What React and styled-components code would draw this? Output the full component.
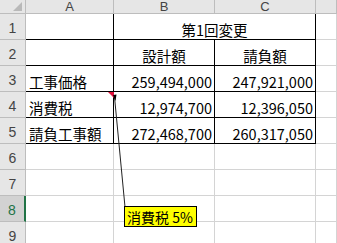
import React from 'react';
import styled, { createGlobalStyle, css } from 'styled-components';

const GlobalStyle = createGlobalStyle`
  html, body {
    margin: 0;
    padding: 0;
    background: #ffffff;
    overflow: hidden;
  }
  body {
    font-family: "Noto Sans CJK JP", "Noto Sans", sans-serif;
  }
`;

const GRID = '#d4d4d4';
const INK = '#000000';

const Sheet = styled.div`
  position: relative;
  width: 337px;
  height: 243px;
  overflow: hidden;
  display: grid;
  grid-template-columns: 26px 88px 101px 101px 1fr;
  grid-template-rows: 14px repeat(9, 26px);
`;

const Corner = styled.div`
  position: relative;
  box-sizing: border-box;
  background: #e6e6e6;
  border-right: 1px solid #bdbdbd;
  border-bottom: 1px solid #bdbdbd;

  &::after {
    content: '';
    position: absolute;
    right: 3px;
    bottom: 2px;
    width: 0;
    height: 0;
    border-left: 9px solid transparent;
    border-bottom: 9px solid #b9b9b9;
  }
`;

const ColHeader = styled.div`
  box-sizing: border-box;
  background: #e6e6e6;
  border-right: 1px solid #bdbdbd;
  border-bottom: 1px solid #bdbdbd;
  display: flex;
  align-items: center;
  justify-content: center;
  font-family: "Liberation Sans", "Noto Sans", sans-serif;
  font-size: 13px;
  line-height: 14px;
  color: #444444;
`;

const RowHeader = styled.div`
  box-sizing: border-box;
  background: ${({ active }) => (active ? '#d2d2d2' : '#e6e6e6')};
  border-bottom: 1px solid #bdbdbd;
  border-right: ${({ active }) => (active ? '2px solid #217346' : '1px solid #bdbdbd')};
  display: flex;
  align-items: center;
  justify-content: center;
  padding-top: 3px;
  font-family: "Liberation Sans", "Noto Sans", sans-serif;
  font-size: 14px;
  color: ${({ active }) => (active ? '#217346' : '#444444')};
`;

const Cell = styled.div`
  box-sizing: border-box;
  display: flex;
  align-items: flex-end;
  padding: 0 3px 2px 3px;
  border-right: 1px solid ${({ right }) => (right ? INK : GRID)};
  border-bottom: 1px solid ${({ bottom }) => (bottom ? INK : GRID)};
  font-family: "Noto Sans CJK JP", "Noto Sans", sans-serif;
  font-size: 14.5px;
  line-height: 1;
  color: #000000;
  white-space: nowrap;
  ${({ span }) => span && css`grid-column: span ${span};`}
  ${({ align }) => align === 'right' && css`justify-content: flex-end; padding-right: 2px;`}
  ${({ align }) => align === 'center' && css`justify-content: center;`}
`;

const Comment = styled.div`
  position: absolute;
  left: 124px;
  top: 206px;
  width: 73px;
  height: 21px;
  box-sizing: border-box;
  background: #ffff00;
  border: 1px solid #000000;
  padding: 0 0 0 2px;
  display: flex;
  align-items: center;
  font-family: "Noto Sans CJK JP", "Noto Sans", sans-serif;
  font-size: 14px;
  line-height: 1;
  color: #000000;
  white-space: nowrap;
`;

const Overlay = styled.svg`
  position: absolute;
  left: 0;
  top: 0;
  pointer-events: none;
`;

const rows = [
  ['', { text: '第1回変更', span: 2, align: 'center' }],
  ['', { text: '設計額', align: 'center' }, { text: '請負額', align: 'center' }],
  ['工事価格', { text: '259,494,000', align: 'right' }, { text: '247,921,000', align: 'right' }],
  ['消費税', { text: '12,974,700', align: 'right' }, { text: '12,396,050', align: 'right' }],
  ['請負工事額', { text: '272,468,700', align: 'right' }, { text: '260,317,050', align: 'right' }],
];

export default function App() {
  const blank = [6, 7, 8, 9];
  return (
    <>
      <GlobalStyle />
      <Sheet>
        <Corner />
        <ColHeader>A</ColHeader>
        <ColHeader>B</ColHeader>
        <ColHeader>C</ColHeader>
        <ColHeader />

        {rows.map((row, i) => (
          <React.Fragment key={i}>
            <RowHeader>{i + 1}</RowHeader>
            <Cell right bottom>{row[0]}</Cell>
            {row.slice(1).map((c, j) => (
              <Cell key={j} right bottom span={c.span} align={c.align}>
                {c.text}
              </Cell>
            ))}
            <Cell />
          </React.Fragment>
        ))}

        {blank.map((n) => (
          <React.Fragment key={n}>
            <RowHeader active={n === 8}>{n}</RowHeader>
            <Cell />
            <Cell />
            <Cell />
            <Cell />
          </React.Fragment>
        ))}

        <Overlay width="337" height="243" viewBox="0 0 337 243">
          <polygon points="108,92 114,92 114,98" fill="#e0103a" />
          <line x1="114.5" y1="97" x2="125" y2="207" stroke="#222" strokeWidth="1" />
          <polygon points="113,95 116.5,94.5 115.5,101" fill="#000" />
        </Overlay>
        <Comment>消費税 5%</Comment>
      </Sheet>
    </>
  );
}
